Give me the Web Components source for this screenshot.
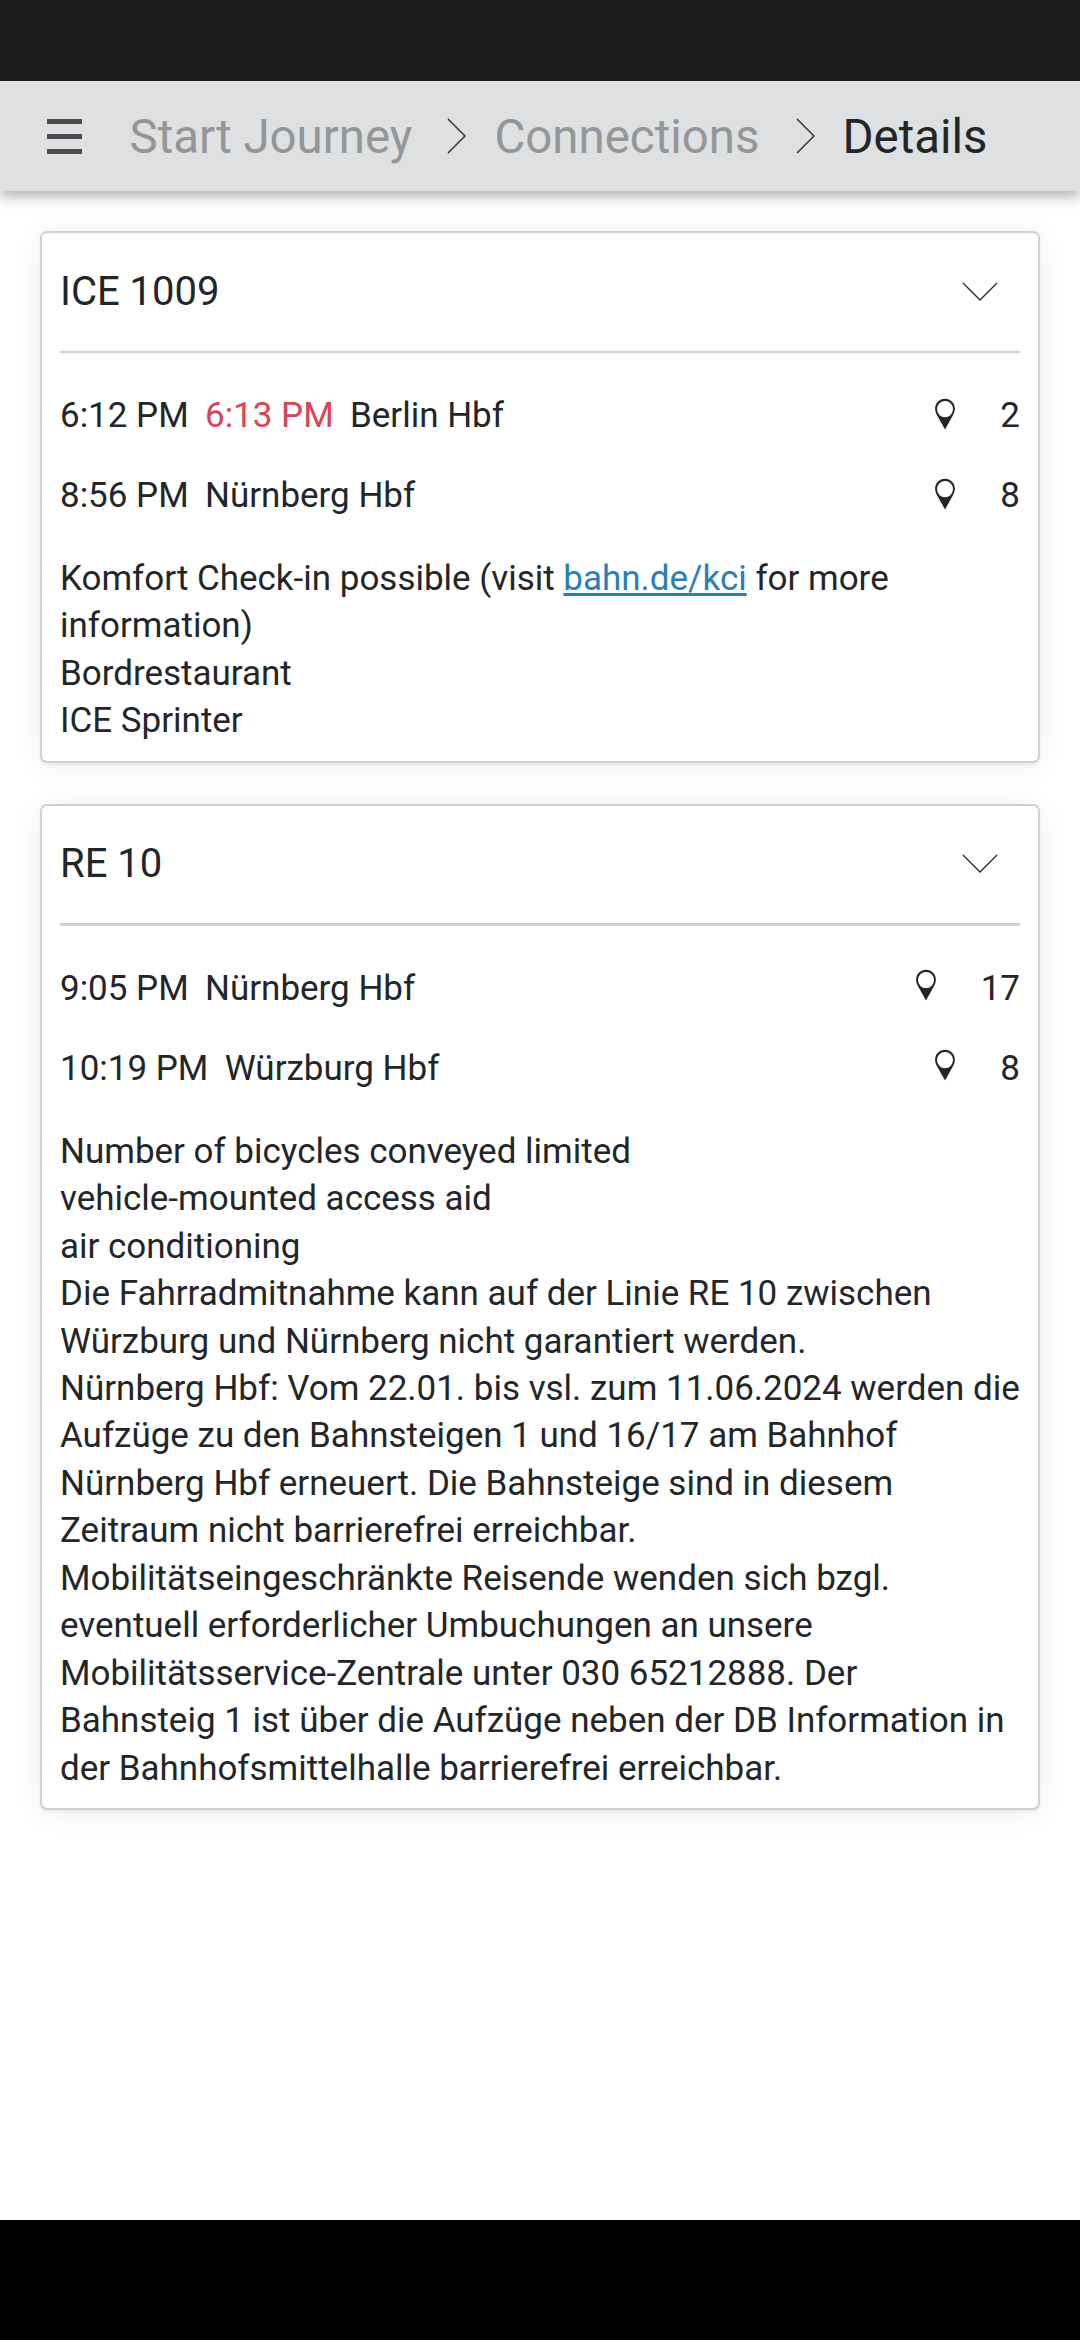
<!DOCTYPE html>
<html lang="en">
<head>
<meta charset="utf-8">
<title>Journey details</title>
<style>
  html, body { margin: 0; padding: 0; background: #000; }
  body { width: 1080px; height: 2340px; overflow: hidden; font-family: Roboto, "Noto Sans", sans-serif; font-size: 34.97px; color: #232629; }
</style>
</head>
<body>
<journey-app>
  <crumb-bar slot="header"></crumb-bar>
  <trip-card name="ICE 1009" style="height:532px">
    <stop-row slot="stop" time="6:12 PM" delayed="6:13 PM" station="Berlin Hbf" platform="2"></stop-row>
    <stop-row slot="stop" time="8:56 PM" station="Nürnberg Hbf" platform="8"></stop-row>
    <trip-note>Komfort Check-in possible (visit <trip-link>bahn.de/kci</trip-link> for more<br>information)</trip-note>
    <trip-note>Bordrestaurant</trip-note>
    <trip-note>ICE Sprinter</trip-note>
  </trip-card>
  <trip-card name="RE 10" style="height:1006.5px;--rule:3px;--head:117.5px;--lead:22.8px;--pin:-7px">
    <stop-row slot="stop" time="9:05 PM" station="Nürnberg Hbf" platform="17"></stop-row>
    <stop-row slot="stop" time="10:19 PM" station="Würzburg Hbf" platform="8"></stop-row>
    <trip-note>Number of bicycles conveyed limited</trip-note>
    <trip-note>vehicle-mounted access aid</trip-note>
    <trip-note>air conditioning</trip-note>
    <trip-note>Die Fahrradmitnahme kann auf der Linie RE 10 zwischen<br>Würzburg und Nürnberg nicht garantiert werden.</trip-note>
    <trip-note>Nürnberg Hbf: Vom 22.01. bis vsl. zum 11.06.2024 werden die<br>Aufzüge zu den Bahnsteigen 1 und 16/17 am Bahnhof<br>Nürnberg Hbf erneuert. Die Bahnsteige sind in diesem<br>Zeitraum nicht barrierefrei erreichbar.<br>Mobilitätseingeschränkte Reisende wenden sich bzgl.<br>eventuell erforderlicher Umbuchungen an unsere<br>Mobilitätsservice-Zentrale unter 030 65212888. Der<br>Bahnsteig 1 ist über die Aufzüge neben der DB Information in<br>der Bahnhofsmittelhalle barrierefrei erreichbar.</trip-note>
  </trip-card>
</journey-app>
<script>
function element(name, markup) {
  customElements.define(name, class extends HTMLElement {
    constructor() {
      super();
      this.attachShadow({ mode: 'open' });
    }
    connectedCallback() {
      this.shadowRoot.innerHTML = typeof markup === 'function' ? markup(this) : markup;
    }
  });
}

element('journey-app', `
<style>
  :host { display: flex; flex-direction: column; height: 2340px; background: #000; }
  .status { height: 81px; background: #1b1d1e; flex: none; }
  main { height: 2029px; flex: none; padding: 40px 40px 0; box-sizing: border-box;
    display: flex; flex-direction: column; gap: 40.5px; background: #fff; overflow: hidden; }
</style>
<div class="status"></div>
<slot name="header"></slot>
<main><slot></slot></main>`);

element('crumb-bar', `
<style>
  :host { display: block; flex: none; height: 110px; background: #dee0e2; z-index: 1; position: relative;
    box-shadow: 0 4px 14px rgba(0,0,0,.36); }
  nav { height: 110px; display: grid; align-items: center; white-space: nowrap;
    grid-template-columns: 129.5px 317px 48px 301px 47px auto; font-size: 47.4px; color: #949698; }
  .menu { justify-self: start; margin-left: 47px; width: 35px; height: 35px; display: flex; flex-direction: column; justify-content: space-between; }
  .menu i { height: 5px; background: #4a4c4f; }
  span, b { padding-top: 1px; }
  b { font-weight: 400; color: #232629; }
  svg { display: block; }
</style>
<nav>
  <div class="menu"><i></i><i></i><i></i></div>
  <span>Start Journey</span>
  <svg width="20" height="36" viewBox="0 0 20 36"><path d="M1 1L18 18L1 35" fill="none" stroke="#232629" stroke-width="1.3"/></svg>
  <span>Connections</span>
  <svg width="20" height="36" viewBox="0 0 20 36"><path d="M1 1L18 18L1 35" fill="none" stroke="#232629" stroke-width="1.3"/></svg>
  <b>Details</b>
</nav>`);

element('trip-card', el => `
<style>
  :host { display: block; flex: none; box-sizing: border-box; border: 2px solid #cdd1d4; border-radius: 7px; background: #fff;
    padding: 0 18px; box-shadow: 0 3px 28px rgba(0,0,0,.07), 0 2px 3px rgba(0,0,0,.06); }
  header { height: var(--head, 118px); display: flex; align-items: center; justify-content: space-between; border-bottom: var(--rule, 2px) solid #cdd1d4; font-size: 40px; }
  header span { padding-bottom: 1px; }
  svg { display: block; margin-right: 22px; }
  .stops { padding-top: var(--lead, 23px); }
  .notes { margin-top: 19.6px; }
</style>
<header><span>${el.getAttribute('name')}</span>
<svg width="36" height="20" viewBox="0 0 36 20"><path d="M1 1L18 18L35 1" fill="none" stroke="#232629" stroke-width="1.3"/></svg></header>
<div class="stops"><slot name="stop"></slot></div>
<div class="notes"><slot></slot></div>`);

element('stop-row', el => `
<style>
  :host { display: flex; align-items: center; height: 79.7px; white-space: nowrap; }
  span { margin-right: 16.3px; }
  .late { color: #da4453; }
  .platform { margin-left: auto; display: flex; align-items: center; }
  svg { display: block; margin: var(--pin, -3px) 44px 0 0; }
</style>
<span>${el.getAttribute('time')}</span>${el.hasAttribute('delayed') ? `<span class="late">${el.getAttribute('delayed')}</span>` : ''}<span style="margin-right:0">${el.getAttribute('station')}</span>
<div class="platform"><svg width="22" height="32" viewBox="0 0 22 32"><path fill="#232629" fill-rule="evenodd" d="M11 .8C5.3 .8 1.1 5.2 1.1 10.7C1.1 13.4 2.2 15.6 3.3 17.7L11 31.5L18.7 17.7C19.8 15.6 20.9 13.4 20.9 10.7C20.9 5.2 16.7 .8 11 .8ZM11 2.9A8 8.2 0 1 1 11 19.3A8 8.2 0 1 1 11 2.9Z"/></svg>${el.getAttribute('platform')}</div>`);

element('trip-note', `
<style>:host { display: block; line-height: 47.45px; white-space: nowrap; }</style><slot></slot>`);

element('trip-link', `
<style>:host { color: #2980b9; text-decoration: underline; text-decoration-thickness: 3px; text-underline-offset: 3px; text-decoration-skip-ink: none; }</style><slot></slot>`);
</script>
</body>
</html>
